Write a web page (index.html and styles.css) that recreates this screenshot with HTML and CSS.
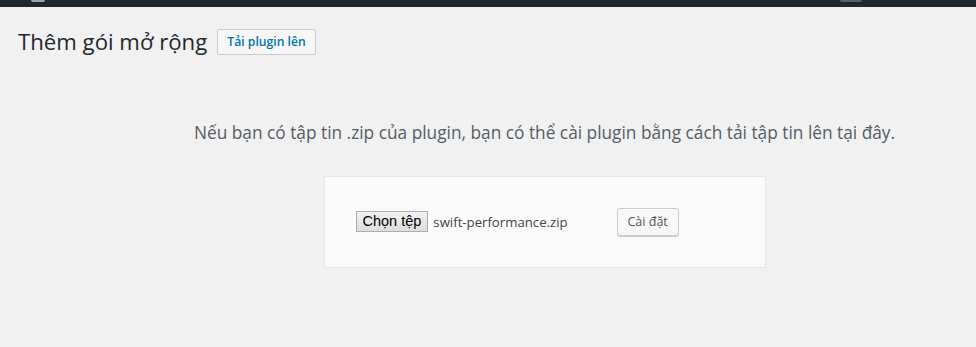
FILE: index.html
```html
<!DOCTYPE html>
<html lang="vi">

<head>
    <meta charset="UTF-8" />
    <meta name="viewport" content="width=device-width, initial-scale=1.0" />
    <title>Thêm gói mở rộng</title>
    <link rel="stylesheet" href="styles.css">
</head>

<body>
    <div class="admin-bar">
        <span class="bar-icon bar-icon-left"></span>
        <span class="bar-icon bar-icon-right"></span>
    </div>

    <div class="wrap">
        <div class="page-head">
            <h1 class="page-title">Thêm gói mở rộng</h1>
            <a class="title-action" href="#">Tải plugin lên</a>
        </div>

        <div class="upload-plugin">
            <p class="install-help">Nếu bạn có tập tin .zip của plugin, bạn có thể cài plugin bằng cách tải tập tin lên tại đây.</p>
            <form class="upload-form">
                <div class="file-field">
                    <span class="file-btn">Chọn tệp</span>
                    <span class="file-name">swift-performance.zip</span>
                </div>
                <button type="button" class="button">Cài đặt</button>
            </form>
        </div>
    </div>
</body>

</html>
```

FILE: styles.css
```css
body {
    margin: 0;
    background-color: #f1f1f1;
    font-family: "Open Sans", "Noto Sans", sans-serif;
    color: #444;
    overflow: hidden;
}

/* thanh quản trị phía trên, chỉ còn lại một dải mỏng */
.admin-bar {
    height: 7px;
    background-color: #23282d;
    display: flex;
    align-items: flex-start;
}

.bar-icon {
    display: block;
    height: 2px;
    border-radius: 0 0 4px 4px;
}

.bar-icon-left {
    width: 14px;
    margin-left: 31px;
    background-color: #9ea3a8;
}

.bar-icon-right {
    width: 22px;
    margin-left: 795px;
    background-color: #5b5f63;
}

.wrap {
    padding: 0 0 0 18px;
}

.page-head {
    display: flex;
    align-items: center;
    gap: 10px;
    padding-top: 21px;
}

.page-title {
    margin: 0;
    font-size: 22.2px;
    font-weight: 400;
    line-height: 1.3;
    color: #23282d;
}

.title-action {
    display: inline-block;
    padding: 4px 9px;
    border: 1px solid #ccc;
    border-radius: 2px;
    background-color: #f7f7f7;
    color: #0073aa;
    font-size: 12.2px;
    font-weight: 600;
    line-height: 16px;
    text-decoration: none;
}

.upload-plugin {
    display: flex;
    flex-direction: column;
    align-items: center;
    padding-left: 95px;
}

.install-help {
    margin: 0;
    padding-top: 64px;
    font-size: 17.3px;
    color: #555d66;
    text-align: center;
}

.upload-form {
    display: flex;
    align-items: center;
    width: 380px;
    height: 30px;
    margin-top: 32px;
    padding: 30px;
    background-color: #fafafa;
    border: 1px solid #e5e5e5;
}

.file-field {
    display: flex;
    align-items: center;
    width: 253px;
    margin-left: 1px;
    margin-right: 8px;
}

.file-btn {
    display: inline-block;
    padding: 1px 6px;
    border: 1px solid #adadad;
    background: linear-gradient(#f2f2f2, #dddddd);
    color: #000;
    font-family: "Liberation Sans", Arial, sans-serif;
    font-size: 14.5px;
    line-height: 17px;
}

.file-name {
    margin-left: 5px;
    font-size: 13.2px;
    color: #444;
}

.button {
    height: 28px;
    padding: 0 10px;
    border: 1px solid #ccc;
    border-radius: 3px;
    background-color: #f7f7f7;
    box-shadow: 0 1px 0 #ccc;
    color: #555;
    font-family: "Open Sans", sans-serif;
    font-size: 12.5px;
    cursor: pointer;
}
```
